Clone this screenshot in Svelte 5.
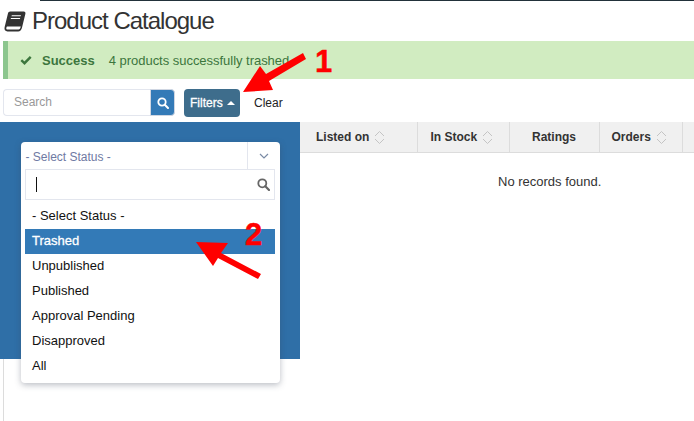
<script>
  const options = ['- Select Status -', 'Trashed', 'Unpublished', 'Published', 'Approval Pending', 'Disapproved', 'All'];
  const cols = [
    { label: 'Listed on', w: 117.5, sort: true },
    { label: 'In Stock', w: 92, sort: true, left: 13 },
    { label: 'Ratings', w: 90, center: true },
    { label: 'Orders', w: 83, sort: true, left: 12 },
    { label: '', w: 11.5 }
  ];
</script>

<div class="page">
  <div class="topline"></div>
  <h1 class="title">
    <svg class="book" viewBox="0 0 22 21" width="22" height="21" aria-hidden="true">
      <path fill="#333" d="M6.200.5h13.600c1.200 0 1.900 1 1.600 2.200l-3.500 14.400c-.5 1.900-1.800 3.400-3.800 3.400H3.500C1.300 20.500 0 18.600.6 16.300L4 2.300C4.300 1.200 5.100.5 6.200.5z"/>
      <path fill="#fff" d="M3.300 15.500h13.500l-.5 1.600c-.2.700-.8 1.400-1.700 1.400H3.600c-1.100 0-1.500-.8-1.300-1.600.1-.7.500-1.400 1-1.400z"/>
      <path fill="#fff" d="M7.800 4.200h9.200l-.3 1.100H7.500zM7 7h9.200l-.3 1.100H6.700z"/>
    </svg>
    Product Catalogue
  </h1>

  <div class="alert">
    <svg class="check" viewBox="0 0 12 10" width="12" height="10" aria-hidden="true">
      <path d="M1.300 5.200 4.500 8.200 10.700 1.800" fill="none" stroke="#3c763d" stroke-width="2.400"/>
    </svg>
    <strong>Success</strong>
    <span>4 products successfully trashed</span>
  </div>

  <div class="toolbar">
    <div class="search">
      <input class="search-input" placeholder="Search" />
      <button class="search-btn" aria-label="Search">
        <svg viewBox="0 0 12 12" width="12" height="12"><circle cx="5" cy="5" r="3.700" fill="none" stroke="#fff" stroke-width="1.800"/><path d="M7.800 7.800 11 11" stroke="#fff" stroke-width="2" stroke-linecap="round"/></svg>
      </button>
    </div>
    <button class="filters">Filters <i class="caret"></i></button>
    <span class="clear">Clear</span>
  </div>

  <div class="content">
    <aside class="panel">
      <div class="dropdown">
        <div class="select-head">
          <span class="select-value">- Select Status -</span>
          <span class="select-arrow">
            <svg viewBox="0 0 10 6" width="10" height="6"><path d="M1 1l4 4 4-4" fill="none" stroke="#7a8ba5" stroke-width="1.200"/></svg>
          </span>
        </div>
        <div class="select-search">
          <i class="cursor"></i>
          <svg viewBox="0 0 13 13" width="13" height="13"><circle cx="5.300" cy="5.300" r="4" fill="none" stroke="#666" stroke-width="1.800"/><path d="M8.300 8.300 12 12" stroke="#666" stroke-width="2.200" stroke-linecap="round"/></svg>
        </div>
        <ul class="options">
          {#each options as o, i}
            <li class:active={i === 1}>{o}</li>
          {/each}
        </ul>
      </div>
    </aside>
    <div class="table">
      <div class="thead">
        {#each cols as c}
          <div class="th" class:center={c.center} style="width:{c.w}px;padding-left:{c.left ?? 16}px">
            {c.label}
            {#if c.sort}
              <svg class="sort" viewBox="0 0 11 15" width="11" height="15"><path d="M1 6l4.500-4.500L10 6M1 9l4.500 4.500L10 9" fill="none" stroke="#c4c4c4" stroke-width="1"/></svg>
            {/if}
          </div>
        {/each}
      </div>
      <div class="empty">No records found.</div>
    </div>
  </div>
  <div class="rail"></div>

  <svg class="annot" viewBox="0 0 694 421" width="694" height="421" aria-hidden="true">
    <path fill="#f00" d="M243 93 260 67 266 75 303 54 306 60 269 82 273 91z"/>
    <path fill="#f00" d="M196 243 228 244 221 254 261 275 258 280 218 259 213 267z"/>
    <text x="315" y="73" class="num">1</text>
    <text x="245" y="246" class="num">2</text>
  </svg>
</div>

<style>
  :global(body) {
    margin: 0;
    background: #fff;
    font-family: "Liberation Sans", Arial, sans-serif;
  }
  .page {
    position: relative;
    width: 694px;
    height: 421px;
    overflow: hidden;
    color: #333;
    font-size: 13px;
  }
  .topline {
    height: 1px;
    margin-left: 40px;
    background: #22313a;
  }
  .title {
    display: flex;
    align-items: center;
    gap: 6px;
    margin: 0;
    height: 40px;
    padding: 0 0 0 4px;
    font-size: 24px;
    font-weight: 400;
    letter-spacing: -1px;
    color: #333;
  }
  .book { flex: none; }
  .alert {
    display: flex;
    align-items: center;
    height: 38px;
    margin-left: 3px;
    padding-left: 12px;
    box-sizing: border-box;
    background: #d1ecc1;
    border-left: 5px solid #8cc68e;
    color: #3c763d;
    font-size: 13px;
  }
  .check { margin-right: 10px; }
  .alert strong { margin-right: 14px; }
  .alert span { letter-spacing: -.03px; }
  .toolbar {
    display: flex;
    align-items: center;
    height: 27px;
    margin: 10px 0 6px 3px;
  }
  .search { display: flex; width: 172px; height: 27px; }
  .search-input {
    width: 147px;
    box-sizing: border-box;
    padding: 0 10px 2px;
    border: 1px solid #e3e6ee;
    border-right: 0;
    border-radius: 4px 0 0 4px;
    font: 12px "Liberation Sans", Arial, sans-serif;
    outline: none;
  }
  .search-input::placeholder { color: #999; }
  .search-btn {
    display: flex;
    align-items: center;
    justify-content: center;
    width: 25px;
    padding: 0;
    border: 1px solid #cfd6e2;
    border-radius: 0 4px 4px 0;
    background: #337ab7;
  }
  .filters {
    width: 56px;
    height: 28px;
    margin-left: 9px;
    padding: 0 0 0 1px;
    border: 0;
    border-radius: 4px;
    background: #3e6d8c;
    color: #fff;
    font: 12px "Liberation Sans", Arial, sans-serif;
    -webkit-text-stroke: .3px #fff;
  }
  .caret {
    display: inline-block;
    margin-left: 1px;
    vertical-align: 2px;
    border-left: 4px solid transparent;
    border-right: 4px solid transparent;
    border-bottom: 4px solid #fff;
  }
  .clear { margin-left: 14px; font-size: 12px; color: #222; margin-top: 1px; }
  .content { display: flex; align-items: flex-start; }
  .panel {
    position: relative;
    flex: none;
    width: 300px;
    height: 237px;
    background: #2f6fa7;
  }
  .dropdown {
    position: absolute;
    left: 20.500px;
    top: 20px;
    width: 259px;
    height: 241px;
    box-sizing: border-box;
    background: #fff;
    border-radius: 4px;
    box-shadow: 0 2px 6px rgba(60, 70, 90, .35);
  }
  .select-head { display: flex; height: 27px; }
  .select-value {
    flex: 1;
    padding: 8px 0 0 5px;
    font-size: 12px;
    color: #6f7aa3;
  }
  .select-arrow {
    display: flex;
    align-items: center;
    justify-content: center;
    width: 33px;
    border-left: 1px solid #e3e6ee;
    box-sizing: border-box;
  }
  .select-search {
    display: flex;
    align-items: center;
    justify-content: space-between;
    height: 31px;
    margin: 0 4.500px;
    padding: 0 4px 0 10px;
    border: 1px solid #e3e6ee;
    box-sizing: border-box;
  }
  .cursor { width: 1px; height: 15px; background: #111; }
  .options { list-style: none; margin: 4px 4.500px 0; padding: 0; }
  .options li {
    height: 25px;
    line-height: 24px;
    padding-left: 7px;
    font-size: 13px;
    color: #111;
  }
  .options li.active {
    background: #337ab7;
    color: #fff;
    -webkit-text-stroke: .3px #fff;
  }
  .table { flex: 1; }
  .thead {
    display: flex;
    height: 31px;
    background: #f0f0f0;
    border-bottom: 1px solid #dcdcdc;
    box-sizing: border-box;
  }
  .th {
    display: flex;
    align-items: center;
    gap: 5px;
    box-sizing: border-box;
    flex: none;
    border-right: 1px solid #dcdcdc;
    font-size: 12px;
    font-weight: 700;
    color: #333;
  }
  .th.center { justify-content: center; padding-left: 0 !important; }
  .th:last-child { border-right: 0; }
  .sort { flex: none; }
  .empty {
    margin-top: 21px;
    padding-left: 198px;
    font-size: 13px;
    color: #333;
  }
  .rail {
    position: absolute;
    left: 3px;
    top: 359px;
    bottom: 0;
    width: 1px;
    background: #dcdcdc;
  }
  .annot { position: absolute; left: 0; top: -1px; pointer-events: none; }
  .num {
    font: 700 31px "Liberation Sans", Arial, sans-serif;
    fill: #f00;
    stroke: #f00;
    stroke-width: .4px;
  }
</style>
